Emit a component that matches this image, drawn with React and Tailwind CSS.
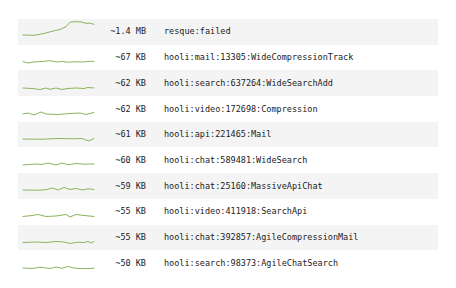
const rows = [
  { size: "~1.4 MB", name: "resque:failed", pts: [[1,16],[12,16.3],[22,14.5],[30,12.3],[38,10.5],[44,7.8],[48,3.2],[54,2.7],[60,3],[64,4.5],[67,4],[72,5.3]] },
  { size: "~67 KB", name: "hooli:mail:13305:WideCompressionTrack", pts: [[1,16.5],[6,18],[12,17],[20,16.5],[28,15.7],[34,17],[40,16.5],[46,17.2],[54,16.8],[62,17],[68,16.3],[72,16.5]] },
  { size: "~62 KB", name: "hooli:search:637264:WideSearchAdd", pts: [[1,18],[10,18.5],[18,19.5],[24,18],[28,19.3],[34,18],[40,19.5],[46,18.5],[54,18],[62,18.5],[66,17.5],[72,18]] },
  { size: "~62 KB", name: "hooli:video:172698:Compression", pts: [[1,18],[6,17],[12,19],[19,16],[24,18],[36,18.5],[48,17.5],[58,17],[64,18.5],[68,17.5],[72,16.5]] },
  { size: "~61 KB", name: "hooli:api:221465:Mail", pts: [[1,17],[20,17.2],[36,16.5],[50,16.8],[60,16.5],[64,18],[67,19],[72,16.5]] },
  { size: "~60 KB", name: "hooli:chat:589481:WideSearch", pts: [[1,18],[14,17],[20,17.5],[26,16],[34,18],[40,16],[46,17.8],[54,16.5],[62,17.2],[72,17]] },
  { size: "~59 KB", name: "hooli:chat:25160:MassiveApiChat", pts: [[1,17],[14,17.2],[24,16.8],[30,15],[36,17],[42,14.5],[48,16.5],[54,15.5],[60,17],[66,15.8],[72,16.5]] },
  { size: "~55 KB", name: "hooli:video:411918:SearchApi", pts: [[1,17.5],[10,16.5],[16,15.5],[24,17.5],[34,17],[44,15.5],[48,18],[54,15.5],[62,16.5],[72,17.5]] },
  { size: "~55 KB", name: "hooli:chat:392857:AgileCompressionMail", pts: [[1,17.5],[14,17],[24,17.5],[34,16.5],[42,17],[48,18.5],[56,17.2],[62,17.5],[66,16.5],[69,18],[72,16.5]] },
  { size: "~50 KB", name: "hooli:search:98373:AgileChatSearch", pts: [[1,18],[10,18.5],[18,17.2],[28,18.5],[34,17],[40,18.3],[46,16.5],[52,18],[60,18.7],[72,18.3]] },
];

function Spark({ pts }) {
  const d = pts.map((p, i) => (i === 0 ? "M" : "L") + p[0] + "," + p[1]).join(" ");
  return (
    <svg width="73" height="25.7" viewBox="0 0 73 25.7" className="shrink-0">
      <path d={d} fill="none" stroke="#8ab35c" strokeWidth="1" strokeLinejoin="round" strokeLinecap="round" />
    </svg>
  );
}

export default function App() {
  return (
    <div className="w-[456px] h-[288px] bg-white pt-[19px] pl-[18px]" style={{ fontFamily: '"DejaVu Sans Mono", "Liberation Mono", monospace' }}>
      <div className="w-[420px] flex flex-col">
        {rows.map((r, i) => (
          <div key={i} className={"flex items-center h-[25.7px] pl-[4px] text-[8.5px] text-[#222] " + (i % 2 === 0 ? "bg-[#f4f4f4]" : "bg-white")}>
            <Spark pts={r.pts} />
            <div className="w-[51px] text-right shrink-0">{r.size}</div>
            <div className="ml-[18px] whitespace-nowrap">{r.name}</div>
          </div>
        ))}
      </div>
    </div>
  );
}
